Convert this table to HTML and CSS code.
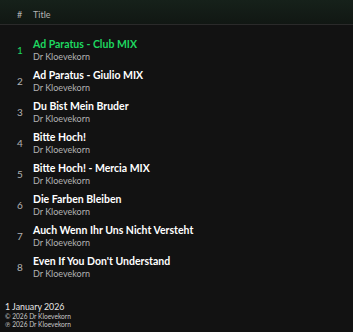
FILE: index.html
```html
<!DOCTYPE html>
<html>
  <head>
    <link rel="stylesheet" href="styles.css">
  </head>
  <body>
    <div id="header">
      <span class="num">#</span>
      <span class="headTitle">Title</span>
    </div>
    <div id="trackList">
      <div class="track playing">
        <span class="num">1</span>
        <div class="info">
          <p class="trackName">Ad Paratus - Club MIX</p>
          <p class="artist">Dr Kloevekorn</p>
        </div>
      </div>
      <div class="track">
        <span class="num">2</span>
        <div class="info">
          <p class="trackName">Ad Paratus - Giulio MIX</p>
          <p class="artist">Dr Kloevekorn</p>
        </div>
      </div>
      <div class="track">
        <span class="num">3</span>
        <div class="info">
          <p class="trackName">Du Bist Mein Bruder</p>
          <p class="artist">Dr Kloevekorn</p>
        </div>
      </div>
      <div class="track">
        <span class="num">4</span>
        <div class="info">
          <p class="trackName">Bitte Hoch!</p>
          <p class="artist">Dr Kloevekorn</p>
        </div>
      </div>
      <div class="track">
        <span class="num">5</span>
        <div class="info">
          <p class="trackName">Bitte Hoch! - Mercia MIX</p>
          <p class="artist">Dr Kloevekorn</p>
        </div>
      </div>
      <div class="track">
        <span class="num">6</span>
        <div class="info">
          <p class="trackName">Die Farben Bleiben</p>
          <p class="artist">Dr Kloevekorn</p>
        </div>
      </div>
      <div class="track">
        <span class="num">7</span>
        <div class="info">
          <p class="trackName">Auch Wenn Ihr Uns Nicht Versteht</p>
          <p class="artist">Dr Kloevekorn</p>
        </div>
      </div>
      <div class="track">
        <span class="num">8</span>
        <div class="info">
          <p class="trackName">Even If You Don't Understand</p>
          <p class="artist">Dr Kloevekorn</p>
        </div>
      </div>
    </div>
    <div id="footer">
      <p class="date">1 January 2026</p>
      <p class="copy">© 2026 Dr Kloevekorn</p>
      <p class="copy">℗ 2026 Dr Kloevekorn</p>
    </div>
  </body>
</html>
```
FILE: styles.css
```css
body {
  margin: 0;
  background-color: #121212;
  font-family: 'Lato', sans-serif;
  color: #ffffff;
  height: 332px;
  overflow: hidden;
}

p {
  margin: 0;
}

#header {
  display: flex;
  align-items: center;
  height: 25px;
  padding: 4px 0 0 17px;
  box-sizing: border-box;
  border-bottom: 1px solid #2a2a2a;
  background: linear-gradient(#16211a, #111713);
  font-size: 9px;
  color: #b3b3b3;
}

.num {
  width: 16px;
  font-size: 10px;
  color: #b3b3b3;
}

#header .num {
  font-size: 9px;
}

#trackList {
  padding-top: 9px;
}

.track {
  display: flex;
  align-items: center;
  height: 31px;
  padding-left: 17px;
}

.trackName {
  font-size: 10.5px;
  font-weight: 700;
  line-height: 13px;
}

.artist {
  font-size: 9px;
  line-height: 11px;
  color: #b3b3b3;
}

.playing .num, .playing .trackName {
  color: #1ed760;
}

#footer {
  padding: 20px 5px 0;
}

.date {
  font-size: 8.8px;
  line-height: 10px;
  color: #e6e6e6;
}

.copy {
  font-size: 6.6px;
  line-height: 8px;
  color: #c8c8c8;
}
```
